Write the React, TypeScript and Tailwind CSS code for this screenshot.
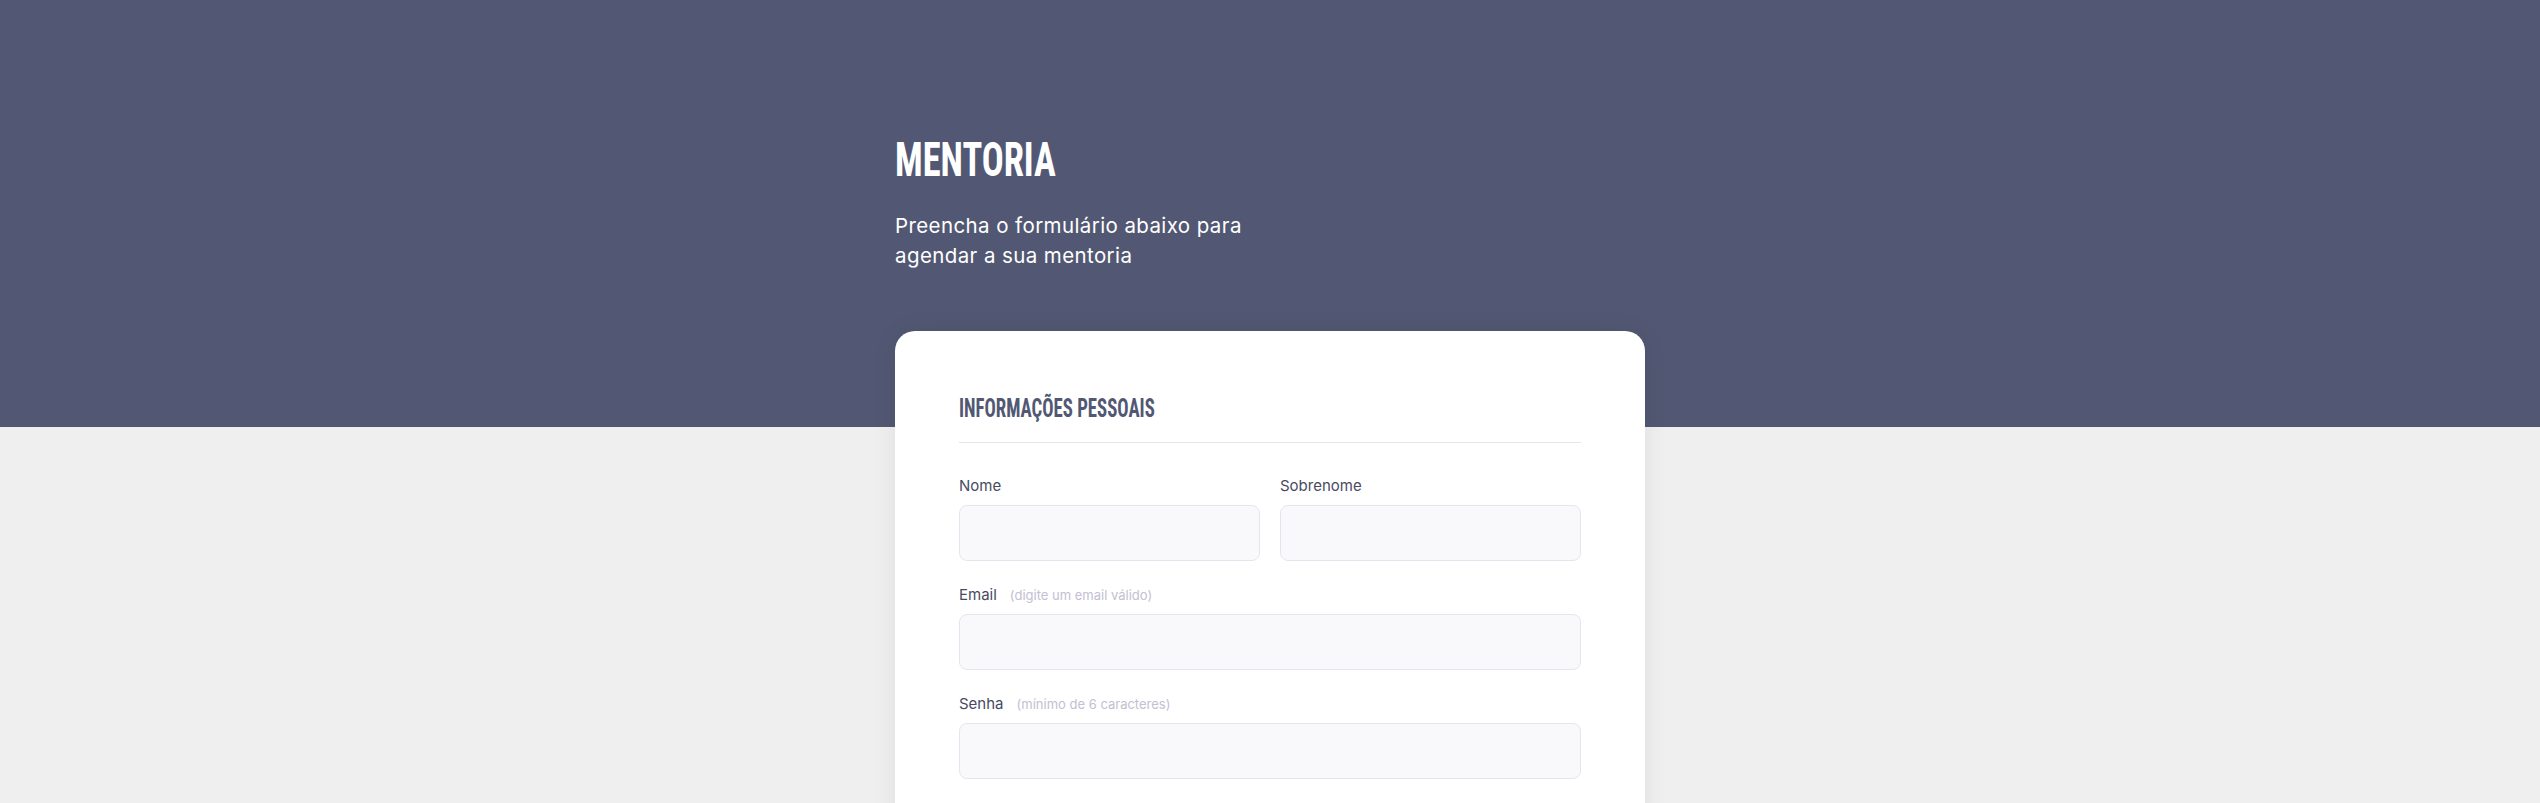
import React from "react";

function Label({ text, hint }: { text: string; hint?: string }) {
  return (
    <div className="flex items-baseline gap-[13px] mb-[9px] h-[21px]">
      <span className="text-[15px] leading-[21px] text-[#474b62]">{text}</span>
      {hint && <span className="text-[13px] leading-[21px] text-[#c3c0d3]">{hint}</span>}
    </div>
  );
}

function Input() {
  return <div className="h-[56px] rounded-lg border border-[#e6e5ef] bg-[#f9f9fb]" />;
}

export default function App() {
  return (
    <div className="min-h-screen bg-[linear-gradient(to_bottom,#525873_427px,#efefef_427px)] font-['Inter','Liberation_Sans',sans-serif]">
      <div className="w-[750px] mx-auto pt-[136px]">
        <h1 className="text-white font-bold text-[48px] leading-[48px] font-['Roboto',sans-serif] font-stretch-condensed origin-left scale-x-[0.76]">
          MENTORIA
        </h1>
        <p className="mt-[27px] text-white text-[20.5px] leading-[30px] tracking-[0.4px] w-[400px]">
          Preencha o formulário abaixo para
          <br />
          agendar a sua mentoria
        </p>
        <div className="mt-[60px] bg-white rounded-[20px] shadow-[0_0_24px_rgba(0,0,0,0.07)] px-16 pt-[64px] pb-16">
          <h2 className="text-[#525873] font-bold text-[25px] leading-[28px] font-['Roboto',sans-serif] font-stretch-condensed origin-left scale-x-[0.75]">
            INFORMAÇÕES PESSOAIS
          </h2>
          <div className="mt-[19px] h-px bg-[#e6e5ec]" />
          <div className="mt-[32px] flex flex-col gap-[23px]">
            <div className="grid grid-cols-2 gap-5">
              <div>
                <Label text="Nome" />
                <Input />
              </div>
              <div>
                <Label text="Sobrenome" />
                <Input />
              </div>
            </div>
            <div>
              <Label text="Email" hint="(digite um email válido)" />
              <Input />
            </div>
            <div>
              <Label text="Senha" hint="(mínimo de 6 caracteres)" />
              <Input />
            </div>
          </div>
        </div>
      </div>
    </div>
  );
}
